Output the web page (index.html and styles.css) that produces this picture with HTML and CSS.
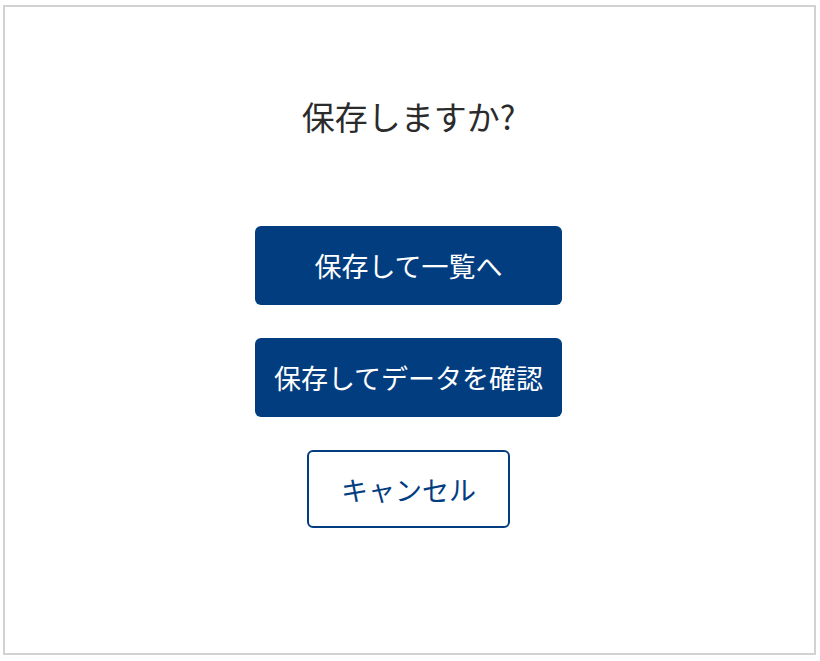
FILE: index.html
```html
<!DOCTYPE html>
<html lang="ja">
<head>
<meta charset="utf-8">
<title>保存しますか?</title>
<link rel="stylesheet" href="styles.css">
</head>
<body>
<div class="page">
  <div class="dialog">
    <h1 class="title">保存しますか?</h1>
    <div class="actions">
      <button class="btn btn-primary">保存して一覧へ</button>
      <button class="btn btn-primary">保存してデータを確認</button>
      <button class="btn btn-outline">キャンセル</button>
    </div>
  </div>
</div>
</body>
</html>
```

FILE: styles.css
```css
html, body {
  margin: 0;
  padding: 0;
  background: #ffffff;
}

body {
  font-family: "Noto Sans CJK JP", "Noto Sans", sans-serif;
}

.page {
  padding: 5px 4px 6px 3px;
}

.dialog {
  box-sizing: border-box;
  height: 650px;
  border: 2px solid #d2d2d2;
  background: #ffffff;
  display: flex;
  flex-direction: column;
  align-items: center;
  padding-top: 88px;
}

.title {
  margin: 0 0 0 -2px;
  font-size: 33px;
  line-height: 42px;
  font-weight: 400;
  color: #2b2b2b;
}

.actions {
  margin-top: 89px;
  display: flex;
  flex-direction: column;
  align-items: center;
  gap: 33px;
  margin-left: -2px;
}

.btn {
  font-family: "Noto Sans CJK JP", "Noto Sans", sans-serif;
  font-size: 27px;
  font-weight: 400;
  border-radius: 6px;
  box-sizing: border-box;
  cursor: pointer;
  padding: 0;
}

.btn-primary {
  width: 307px;
  height: 79px;
  background: #023d80;
  color: #ffffff;
  border: none;
}

.btn-outline {
  width: 203px;
  height: 78px;
  background: #ffffff;
  color: #023d80;
  border: 2px solid #023d80;
}
```
